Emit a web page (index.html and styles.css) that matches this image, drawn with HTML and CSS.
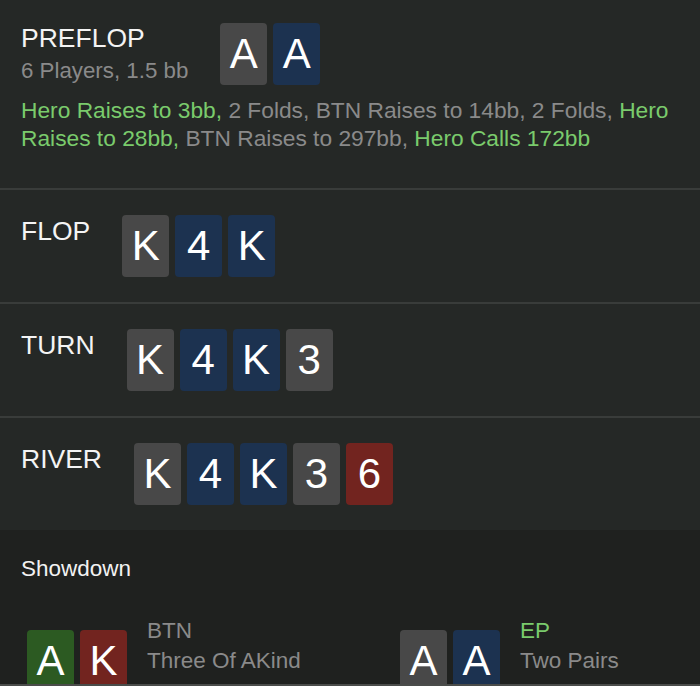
FILE: index.html
```html
<!DOCTYPE html>
<html>
<head>
<meta charset="utf-8">
<link rel="stylesheet" href="styles.css">
</head>
<body>
<div class="app">
  <section class="street preflop">
    <div class="head">
      <div class="titles">
        <div class="label">PREFLOP</div>
        <div class="sub">6 Players, 1.5 bb</div>
      </div>
      <div class="cards">
        <div class="card gray">A</div>
        <div class="card navy">A</div>
      </div>
    </div>
    <p class="actions"><span class="hero">Hero Raises to 3bb,</span> <span class="act">2 Folds, BTN Raises to 14bb, 2 Folds,</span> <span class="hero">Hero</span> <span class="hero">Raises to 28bb,</span> <span class="act">BTN Raises to 297bb,</span> <span class="hero">Hero Calls 172bb</span></p>
  </section>
  <section class="street">
    <div class="head">
      <div class="label">FLOP</div>
      <div class="cards">
        <div class="card gray">K</div>
        <div class="card navy">4</div>
        <div class="card navy">K</div>
      </div>
    </div>
  </section>
  <section class="street">
    <div class="head">
      <div class="label">TURN</div>
      <div class="cards">
        <div class="card gray">K</div>
        <div class="card navy">4</div>
        <div class="card navy">K</div>
        <div class="card gray">3</div>
      </div>
    </div>
  </section>
  <section class="street last">
    <div class="head">
      <div class="label">RIVER</div>
      <div class="cards">
        <div class="card gray">K</div>
        <div class="card navy">4</div>
        <div class="card navy">K</div>
        <div class="card gray">3</div>
        <div class="card red">6</div>
      </div>
    </div>
  </section>
  <section class="showdown">
    <div class="sd-title">Showdown</div>
    <div class="players">
      <div class="player">
        <div class="cards">
          <div class="card green">A</div>
          <div class="card red">K</div>
        </div>
        <div class="pinfo">
          <div class="pos">BTN</div>
          <div class="hand">Three Of AKind</div>
        </div>
      </div>
      <div class="player">
        <div class="cards">
          <div class="card gray">A</div>
          <div class="card navy">A</div>
        </div>
        <div class="pinfo">
          <div class="pos win">EP</div>
          <div class="hand">Two Pairs</div>
        </div>
      </div>
    </div>
  </section>
  <div class="edge"></div>
</div>
</body>
</html>
```
FILE: styles.css
```css
html, body {
  margin: 0;
  padding: 0;
  height: 686px;
  overflow: hidden;
  background: #1f211f;
}
body {
  font-family: "Liberation Sans", Arial, sans-serif;
  color: #f2f2f2;
}
.app {
  width: 700px;
}
.street {
  background: #252826;
  padding: 25px 21px 25px 21px;
  border-bottom: 2px solid #393c3a;
}
.street.last {
  border-bottom: none;
}
.preflop {
  padding-top: 23px;
  padding-bottom: 36px;
}
.head {
  display: flex;
  align-items: flex-start;
  gap: 32px;
}
.label {
  font-size: 26.5px;
  line-height: 30px;
  margin-top: 1px;
  color: #f4f4f4;
}
.preflop .label {
  margin-top: 0;
}
.sub {
  margin-top: 5px;
  font-size: 22.3px;
  line-height: 26px;
  color: #8a8a8a;
}
.cards {
  display: flex;
  gap: 6px;
}
.card {
  width: 47px;
  height: 62px;
  border-radius: 4px;
  display: flex;
  align-items: center;
  justify-content: center;
  font-size: 42px;
  line-height: 1;
  color: #ffffff;
}
.gray { background: #484848; }
.navy { background: #1c3250; }
.red { background: #72241f; }
.green { background: #2c5a22; }
.actions {
  margin: 11px 0 0 0;
  font-size: 22.75px;
  line-height: 28px;
  color: #8a8a8a;
}
.hero { color: #7acb6c; }
.act { color: #8a8a8a; }
.showdown {
  padding: 25px 0 0 21px;
}
.sd-title {
  font-size: 22.5px;
  line-height: 28px;
  color: #f2f2f2;
}
.players {
  margin-top: 33px;
  display: grid;
  grid-template-columns: 373px 1fr;
  padding-left: 6px;
}
.player {
  display: flex;
  align-items: flex-start;
  gap: 20px;
}
.player .cards {
  margin-top: 14px;
}
.pinfo {
  font-size: 22.5px;
  line-height: 30px;
  color: #8a8a8a;
}
.pos.win { color: #7acb6c; }
.edge {
  position: fixed;
  left: 0;
  right: 0;
  bottom: 0;
  height: 2px;
  background: #4a4c4a;
}
```
